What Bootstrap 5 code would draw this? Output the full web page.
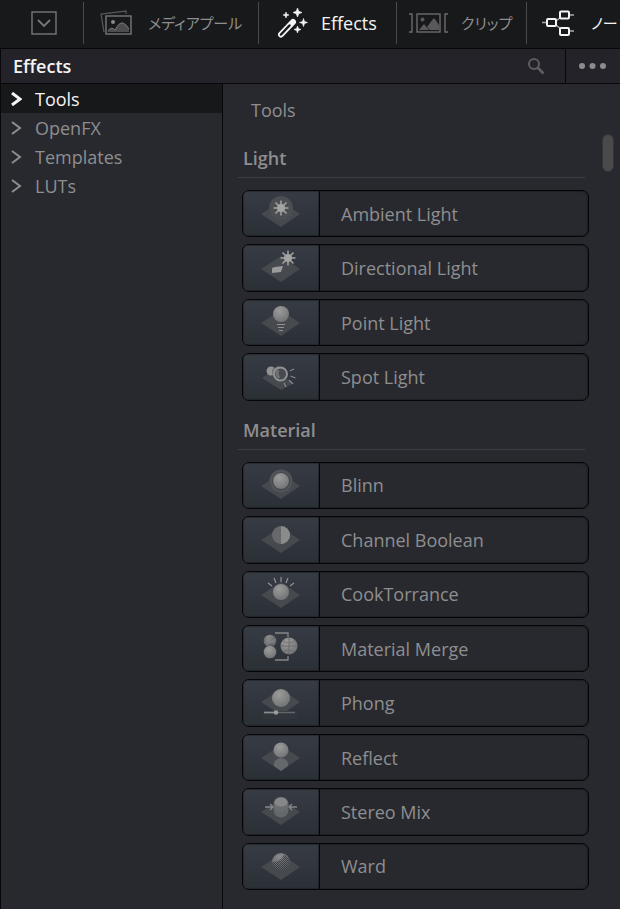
<!DOCTYPE html>
<html lang="ja">
<head>
<meta charset="utf-8">
<meta name="viewport" content="width=device-width, initial-scale=1">
<title>Effects</title>
<link href="https://cdn.jsdelivr.net/npm/bootstrap@5.3.0/dist/css/bootstrap.min.css" rel="stylesheet">
<style>
body{background:#28292e;color:#8e8e90;font-family:"Open Sans","Noto Sans CJK JP",sans-serif;font-size:18px;line-height:24px}
button{font:inherit;color:inherit;background:none;border:0;padding:0}
svg{display:block;flex:none}
.topbar{background:#18191b;height:49px;border-bottom:1px solid #08080b;overflow:hidden}
.tab{height:42px;margin-top:2px;border-right:1px solid #4a4a4c;white-space:nowrap}
.tab:last-child{border-right:0}
.tab.on{color:#f4f4f4}
.tab-menu{width:84px;padding-left:4px}
.tab-pool{width:175px;padding-left:16px;flex:none}
.tab-fx{width:138px;padding-left:18px;flex:none}
.tab-clip{width:130px;padding-left:11px;flex:none}
.tab-node{padding-left:14px}
.tab-menu{flex:none}
.kana{font-size:15px;font-feature-settings:"palt"}
.titlebar{height:35px;background:#232329;border-bottom:1px solid #08080b;border-left:1px solid #08080b}
.titlebar h1{font-size:18px;font-weight:600;color:#f4f4f4;padding:2px 0 0 12px}
.more{width:55px;border-left:1px solid #08080b}
.workspace{min-height:calc(100vh - 84px)}
.tree{width:223px;border-left:1px solid #08080b;border-right:1px solid #08080b;flex:none}
.tree button{display:flex;width:100%;height:29px;align-items:center;padding-left:10px;gap:13px}
.tree .on{background:#17181a;color:#f4f4f4}
.tree .on svg{stroke-width:3}
.chev{width:11px;height:14px;fill:none;stroke:currentColor;stroke-width:2}
.browser{padding:0 31px 12px 19px;min-width:0}
.crumb{line-height:52px;padding-left:9px}
.group-title{font-size:18px;font-weight:600;line-height:24px;border-bottom:1px solid #3d3e42;margin:0 4px 12px -4px;padding:10px 0 7px 5px}
.effect{flex:1 1 0;min-height:46px;display:flex;align-items:center;border:1px solid #050509;box-shadow:inset 0 0 1px 1px #0b0b1055;border-radius:7px;margin-bottom:7px;text-align:left;overflow:hidden}
.thumb{width:77px;align-self:stretch;display:flex;align-items:center;background:linear-gradient(#373b43,#2b2f36);border-right:1px solid #050509;box-shadow:inset 0 0 1px 1px #0b0b1055;margin-right:21px;flex:none}
.scroll-handle{position:absolute;right:6px;top:50px;width:12px;height:38px;border-radius:6px;background:#4a4a4d;border:1px solid #37373a}
</style>
<script src="https://cdn.jsdelivr.net/npm/bootstrap@5.3.0/dist/js/bootstrap.bundle.min.js"></script>
</head>
<body>
<svg width="0" height="0" class="position-absolute" aria-hidden="true">
<defs>
<radialGradient id="ball" cx=".4" cy=".3" r=".75"><stop offset="0" stop-color="#9b9b9b"/><stop offset="1" stop-color="#717273"/></radialGradient>
<radialGradient id="dim" cx=".4" cy=".2" r=".8"><stop offset="0" stop-color="#8a8b8c"/><stop offset="1" stop-color="#55585b"/></radialGradient>
<pattern id="dots" width="2" height="2" patternUnits="userSpaceOnUse"><path d="M0 0h1v1H0zM1 1h1v1H1z" fill="#3b3f45"/></pattern>
</defs>
<symbol id="plate" viewBox="0 0 76 45"><path d="M18 23 38 10 57 23 38 36z" fill="#464a4f"/></symbol>
<symbol id="sun" viewBox="-9 -9 18 18"><circle r="4" fill="#a3a3a2"/><path d="M0-7.500V7.500M-7.500 0H7.500M-5.500-5.500 5.500 5.500M5.500-5.500-5.500 5.500" stroke="#a3a3a2" stroke-width="1.500"/></symbol>
</svg>

<nav class="topbar d-flex" aria-label="Pages">
<button class="tab tab-menu d-flex align-items-center justify-content-center" aria-label="Menu"><svg width="26" height="26" viewBox="0 0 26 26" fill="none" stroke="#77777a" stroke-width="1.400"><rect x="1" y="2" width="24" height="22"/><path d="m7 10 6 6 6-6" stroke-width="1.800"/></svg></button>
<button class="tab tab-pool d-flex align-items-center gap-3"><svg width="32" height="26" viewBox="0 0 32 26"><path d="M4 22 1 4 26 1v3" fill="none" stroke="#555557" stroke-width="1.300"/><rect x="6" y="6" width="25" height="18" fill="#18191b" stroke="#77777a" stroke-width="1.400"/><circle cx="13" cy="12" r="2" fill="#88888a"/><path d="M8 21q3-5 7-1 4-8 8-7 3 1 6 6v3H8z" fill="#4c4c4f"/><path d="M8 21q3-5 7-1 4-8 8-7 3 1 6 6" fill="none" stroke="#77777a"/></svg><span class="kana">メディアプール</span></button>
<button class="tab tab-fx on d-flex align-items-center"><svg width="32" height="32" viewBox="0 0 32 32" class="me-2 pe-1 w-auto"><path d="M4 27.500 16 15" stroke="#f4f4f4" stroke-width="6" stroke-linecap="round"/><path d="m4 27.500 8.500-9" stroke="#18191b" stroke-width="2.500" stroke-linecap="round"/><g fill="#f4f4f4"><path d="m20.500 1 1.300 3.200L25 5.500l-3.200 1.300-1.300 3.200-1.300-3.200L16 5.500l3.200-1.300zM26.500 11.500l1 3 3 1-3 1-1 3-1-3-3-1 3-1zM20.500 19l.9 2.600 2.600.9-2.600.9-.9 2.600-.9-2.600-2.600-.9 2.600-.9zM9 5l.8 2.200L12 8l-2.200.8L9 11l-.8-2.200L6 8l2.200-.8z" stroke="#f4f4f4" stroke-width=".6"/></g></svg><span>Effects</span></button>
<button class="tab tab-clip d-flex align-items-center"><svg width="41" height="22" viewBox="0 0 41 22" class="me-2 pe-1 w-auto"><g fill="none" stroke="#6b6b6e" stroke-width="1.400"><path d="M1 2h3v18H1M40 2h-3v18h3"/><rect x="9" y="2" width="23" height="18"/></g><g fill="#59595c"><circle cx="14.500" cy="7.500" r="2"/><path d="m11 18 5-6 5 6zM19 15l6-8q1-1 2 0l4 6v5h-9z"/></g></svg><span class="kana">クリップ</span></button>
<button class="tab tab-node on d-flex align-items-center"><svg width="34" height="28" viewBox="0 0 34 28" class="me-3" fill="none" stroke="#f4f4f4"><path d="M1 13.500h5M15 12l5-4M15 16l5 4M28 6h5M28 22h5" stroke="#aaa" stroke-width="1.400"/><g stroke-width="2"><rect x="6" y="10" width="9" height="7" rx="1"/><rect x="19" y="2.500" width="9" height="7" rx="1"/><rect x="19" y="19" width="9" height="7" rx="1"/></g></svg><span class="kana">ノー</span></button>
</nav>

<header class="titlebar d-flex align-items-center">
<h1 class="m-0 flex-grow-1">Effects</h1>
<button class="me-3 pe-1" aria-label="Search"><svg width="18" height="18" viewBox="0 0 18 18" fill="none" stroke="#5e5e61"><circle cx="7" cy="7" r="5" stroke-width="2"/><path d="m10.500 10.500 6 6" stroke-width="2.600"/></svg></button>
<button class="more h-100 d-flex align-items-center justify-content-center" aria-label="More options"><svg width="28" height="6" viewBox="0 0 28 6" fill="#8c8c90"><circle cx="3" cy="3" r="3"/><circle cx="13.500" cy="3" r="3"/><circle cx="24" cy="3" r="3"/></svg></button>
</header>

<div class="workspace d-flex">
<nav class="tree" aria-label="Categories">
<button class="on"><svg class="chev" viewBox="0 0 11 14"><path d="M1 1 9 7 1 13"/></svg>Tools</button>
<button><svg class="chev" viewBox="0 0 11 14"><path d="M1 1 9 7 1 13"/></svg>OpenFX</button>
<button><svg class="chev" viewBox="0 0 11 14"><path d="M1 1 9 7 1 13"/></svg>Templates</button>
<button><svg class="chev" viewBox="0 0 11 14"><path d="M1 1 9 7 1 13"/></svg>LUTs</button>
</nav>
<main class="browser position-relative flex-grow-1 d-flex flex-column">
<div class="crumb">Tools</div>
<h2 class="group-title">Light</h2>
<button class="effect"><span class="thumb"><svg width="76" height="45" viewBox="0 0 76 45"><use href="#plate"/><circle cx="38" cy="17" r="12" fill="#4b4e52"/><use href="#sun" x="29" y="8" width="18" height="18"/></svg></span>Ambient Light</button>
<button class="effect"><span class="thumb"><svg width="76" height="45" viewBox="0 0 76 45"><use href="#plate"/><use href="#sun" x="36" y="3" width="18" height="18"/><path d="m29 22 3-1 8-1-2 6-9 1z" fill="#9a9a9a"/></svg></span>Directional Light</button>
<button class="effect"><span class="thumb"><svg width="76" height="45" viewBox="0 0 76 45"><use href="#plate"/><circle cx="38" cy="14" r="8" fill="url(#ball)"/><path d="M34 24.500h8M35 27.500h6M36 30.500h4" stroke="#929292"/></svg></span>Point Light</button>
<button class="effect"><span class="thumb"><svg width="76" height="45" viewBox="0 0 76 45"><path d="m19 24 10-7 22 12-13 7z" fill="#464a4f"/><circle cx="28" cy="17" r="4.500" fill="#919292"/><path d="m29 15 7-3v16l-7-8z" fill="#747677"/><circle cx="37.500" cy="20" r="6.500" fill="#464a50" stroke="#919292" stroke-width="2"/><path d="M35 16q-2 4 1 8" stroke="#707274" stroke-width="3" fill="none"/><path d="m47 17 4-2M47.500 22l5 2M46 26l4 4M41 29l2 4" stroke="#85878a" stroke-width="1.200"/></svg></span>Spot Light</button>
<h2 class="group-title">Material</h2>
<button class="effect"><span class="thumb"><svg width="76" height="45" viewBox="0 0 76 45"><use href="#plate"/><circle cx="38" cy="18" r="11.500" fill="#505357"/><circle cx="38" cy="18" r="8.500" fill="url(#ball)" stroke="#3e4145"/></svg></span>Blinn</button>
<button class="effect"><span class="thumb"><svg width="76" height="45" viewBox="0 0 76 45"><use href="#plate"/><circle cx="38" cy="18" r="9" fill="#66696c"/><path d="M38 9a9 9 0 0 1 0 18z" fill="#8a8b8b"/></svg></span>Channel Boolean</button>
<button class="effect"><span class="thumb"><svg width="76" height="45" viewBox="0 0 76 45"><use href="#plate"/><circle cx="38" cy="20" r="8" fill="url(#ball)"/><path d="M38 10V5M33 11l-2-5M43 11l2-5M29 14l-4-3M47 14l4-3" stroke="#929292" stroke-width="1.200"/></svg></span>CookTorrance</button>
<button class="effect"><span class="thumb"><svg width="76" height="45" viewBox="0 0 76 45"><circle cx="27" cy="15" r="6.300" fill="url(#dim)"/><path d="m21 17 4-5 3 3 5-3-1 7-4-2-3 3z" fill="#999" opacity=".35"/><circle cx="27" cy="26" r="6.300" fill="url(#ball)"/><circle cx="46" cy="20" r="8.500" fill="url(#ball)"/><path d="M38 20h16M46 12v16M40 15q6 4 12 0M40 26q6-4 12 0" stroke="#666" stroke-width=".7" fill="none"/><path d="M32 7h13v4M32 34h13v-4" fill="none" stroke="#858688" stroke-width="1.300"/></svg></span>Material Merge</button>
<button class="effect"><span class="thumb"><svg width="76" height="45" viewBox="0 0 76 45"><use href="#plate" y="-2"/><path d="M20 30h34v8H20z" fill="#31353c"/><circle cx="38" cy="17" r="9" fill="url(#ball)"/><path d="M21 31.500h31" stroke="#64666a" stroke-width="1.400"/><path d="M21 31.500h11" stroke="#8d8e90" stroke-width="1.400"/><circle cx="33" cy="31.500" r="2.300" fill="#9a9b9b"/></svg></span>Phong</button>
<button class="effect"><span class="thumb"><svg width="76" height="45" viewBox="0 0 76 45"><use href="#plate"/><path d="M31 31q-1-7 7-8 8 1 7 8l-7 5z" fill="#65686b"/><circle cx="38" cy="15" r="7.500" fill="url(#ball)"/></svg></span>Reflect</button>
<button class="effect"><span class="thumb"><svg width="76" height="45" viewBox="0 0 76 45"><use href="#plate"/><circle cx="38" cy="21" r="7.500" fill="#65686b"/><circle cx="38" cy="15.500" r="7.500" fill="#6b6d70"/><ellipse cx="38" cy="13" rx="6.500" ry="4.500" fill="#858788"/><path d="M22 18h8m-3-3 3 3-3 3M54 18h-8m3-3-3 3 3 3" fill="none" stroke="#858789" stroke-width="1.300"/></svg></span>Stereo Mix</button>
<button class="effect"><span class="thumb"><svg width="76" height="45" viewBox="0 0 76 45"><use href="#plate"/><circle cx="38" cy="18" r="9" fill="url(#dim)"/><path d="M29 18q9 0 12-7l5 3a9 9 0 1 1-17 4z" fill="url(#dots)"/></svg></span>Ward</button>
<div class="scroll-handle"></div>
</main>
</div>
</body>
</html>
